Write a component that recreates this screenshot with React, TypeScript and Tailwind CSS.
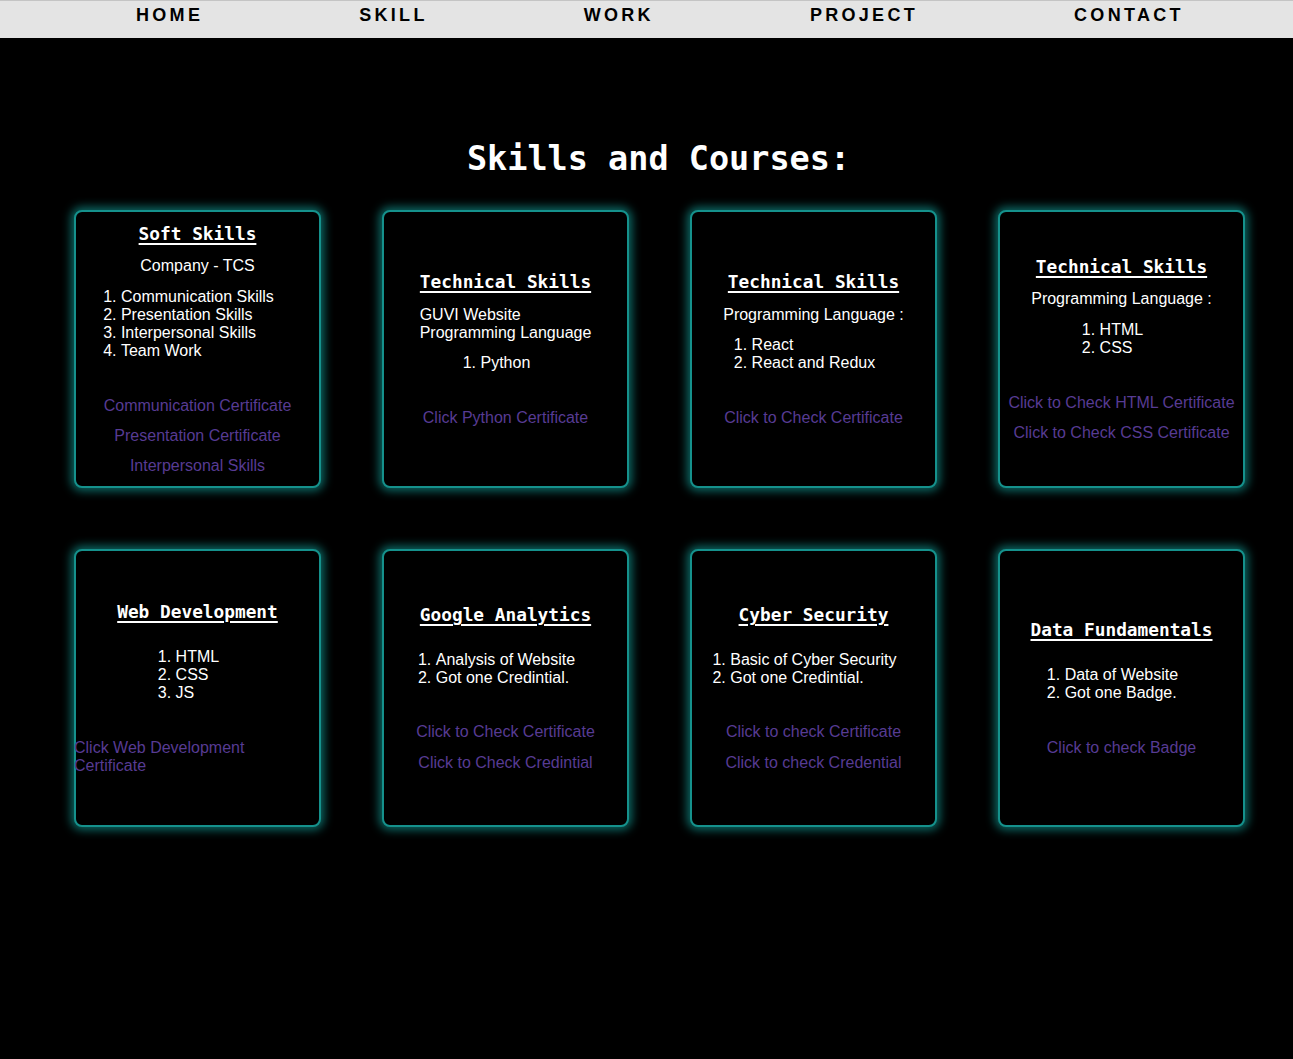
import { ReactNode } from 'react'

const mono = { fontFamily: '"DejaVu Sans Mono", "Liberation Mono", monospace' }
const sans = { fontFamily: '"Liberation Sans", Arial, sans-serif' }

const navItems = ['HOME', 'SKILL', 'WORK', 'PROJECT', 'CONTACT']

function Card({ children }: { children: ReactNode }) {
  return (
    <div className="h-[278px] w-[247px] rounded-[8px] border-2 border-[#15918c] bg-black shadow-[0_0_10px_3px_rgba(16,140,135,0.75)] flex flex-col items-center justify-center text-white text-[16px] leading-[18px]">
      {children}
    </div>
  )
}

function Title({ children }: { children: ReactNode }) {
  return (
    <h3 style={mono} className="text-[17.8px] leading-[22px] font-bold underline underline-offset-[3px] decoration-[1.5px] whitespace-nowrap">
      {children}
    </h3>
  )
}

function List({ items, className = '' }: { items: string[]; className?: string }) {
  return (
    <ol className={`list-decimal list-inside text-left mr-[18px] ${className}`}>
      {items.map((item) => (
        <li key={item}>{item}</li>
      ))}
    </ol>
  )
}

function Links({ items, className = '' }: { items: string[]; className?: string }) {
  return (
    <div className={`flex flex-col items-center gap-[12px] ${className}`}>
      {items.map((item) => (
        <a key={item} href="#" className="text-[#573b93] whitespace-nowrap">
          {item}
        </a>
      ))}
    </div>
  )
}

export default function App() {
  return (
    <div style={sans} className="min-h-[1059px] bg-black">
      {/* Top nav */}
      <nav className="h-[38px] bg-[#e4e4e4] border-t border-[#c4c4c4]">
        <ul className="flex gap-[156px] pl-[136px] pt-[3px]">
          {navItems.map((item) => (
            <li key={item}>
              <a href="#" className="text-[18px] leading-[18px] font-bold tracking-[3.3px] text-black">
                {item}
              </a>
            </li>
          ))}
        </ul>
      </nav>

      <main className="pt-[101px]">
        <h2 style={mono} className="pl-[24px] text-center text-[33.5px] leading-[40px] font-bold text-white">
          Skills and Courses:
        </h2>

        <div style={sans} className="mt-[31px] pl-[74px] grid grid-cols-[repeat(4,247px)] gap-x-[61px] gap-y-[61px]">
          {/* Soft skills */}
          <Card>
            <Title>Soft Skills</Title>
            <p className="mt-[12px]">Company - TCS</p>
            <List
              className="mt-[13px]"
              items={['Communication Skills', 'Presentation Skills', 'Interpersonal Skills', 'Team Work']}
            />
            <Links
              className="mt-[37px]"
              items={['Communication Certificate', 'Presentation Certificate', 'Interpersonal Skills']}
            />
          </Card>

          <Card>
            <Title>Technical Skills</Title>
            <p className="mt-[13px] text-left">
              GUVI Website
              <br />
              Programming Language
            </p>
            <List className="mt-[12px]" items={['Python']} />
            <Links className="mt-[37px]" items={['Click Python Certificate']} />
          </Card>

          <Card>
            <Title>Technical Skills</Title>
            <p className="mt-[13px]">Programming Language :</p>
            <List className="mt-[12px]" items={['React', 'React and Redux']} />
            <Links className="mt-[37px]" items={['Click to Check Certificate']} />
          </Card>

          <Card>
            <Title>Technical Skills</Title>
            <p className="mt-[12px]">Programming Language :</p>
            <List className="mt-[13px]" items={['HTML', 'CSS']} />
            <Links
              className="mt-[37px]"
              items={['Click to Check HTML Certificate', 'Click to Check CSS Certificate']}
            />
          </Card>

          {/* Second row */}
          <Card>
            <Title>Web Development</Title>
            <List className="mt-[25px]" items={['HTML', 'CSS', 'JS']} />
            <a href="#" className="mt-[37px] -ml-[2px] self-start w-[200px] text-left text-[#573b93]">
              Click Web Development Certificate
            </a>
          </Card>

          <Card>
            <Title>Google Analytics</Title>
            <List className="mt-[25px]" items={['Analysis of Website', 'Got one Credintial.']} />
            <Links
              className="mt-[36px] gap-[13px]"
              items={['Click to Check Certificate', 'Click to Check Credintial']}
            />
          </Card>

          <Card>
            <Title>Cyber Security</Title>
            <List className="mt-[25px]" items={['Basic of Cyber Security', 'Got one Credintial.']} />
            <Links
              className="mt-[36px] gap-[13px]"
              items={['Click to check Certificate', 'Click to check Credential']}
            />
          </Card>

          <Card>
            <Title>Data Fundamentals</Title>
            <List className="mt-[25px]" items={['Data of Website', 'Got one Badge.']} />
            <Links className="mt-[37px]" items={['Click to check Badge']} />
          </Card>
        </div>
      </main>
    </div>
  )
}
